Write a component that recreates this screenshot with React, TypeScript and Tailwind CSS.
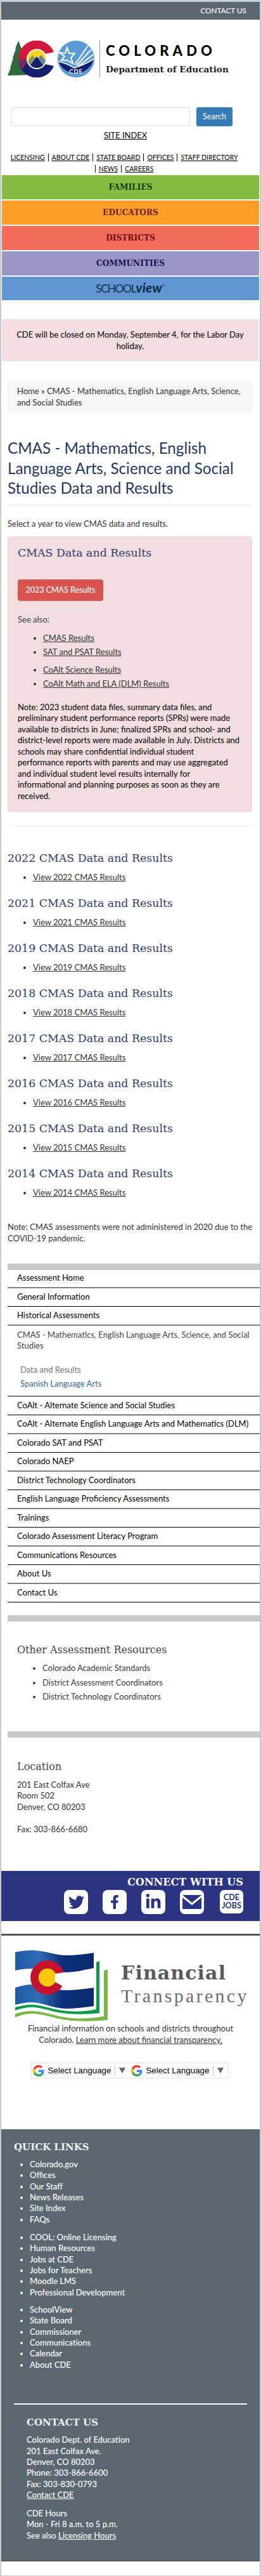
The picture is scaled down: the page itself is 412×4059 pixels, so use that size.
import { FaTwitter, FaFacebookF, FaLinkedinIn } from "react-icons/fa";

const slab = "font-['DejaVu_Serif',serif]";

function CoLogo() {
  return (
    <svg width="139" height="58" viewBox="0 0 139 58" className="block">
      <path d="M18 0 L23 13 L22 13 L28 27 L27 27 L33 43 L31 43 L37 54 L1 55 L6 43 L5 43 L10 27 L9 27 L14 13 L13 13 Z" fill="#2f6b3c" />
      <path d="M74 18 A29 29 0 0 0 18 29 L32 29 A15 15 0 0 1 60 21 Z" fill="#d3193a" />
      <path d="M18 29 A29 29 0 0 0 74 40 L60 37 A15 15 0 0 1 32 29 Z" fill="#14206e" />
      <path d="M18 29 A29 29 0 0 0 24 46 L33 31 L32 29 Z" fill="#7a2c58" />
      <circle cx="47" cy="29" r="16" fill="#fff" />
      <clipPath id="cc"><circle cx="47" cy="29" r="14" /></clipPath>
      <g clipPath="url(#cc)">
        <rect x="33" y="15" width="28" height="28" fill="#ffd21f" />
        <path d="M33 33 L40 23 L47 30 L54 23 L61 33 L61 43 L33 43 Z" fill="#7f9468" />
        <path d="M54 23 L61 32 L61 40 L50 27 Z" fill="#4c89ae" />
        <path d="M34 43 L47 25 L60 43 Z" fill="#14206e" />
      </g>
      <circle cx="109" cy="29" r="29" fill="#5b9bd3" />
      <path d="M81.5 33 Q95 36 106 43 Q123 38 136.8 29 A29 29 0 0 1 81.5 33 Z" fill="#14206e" />
      <path d="M81.5 33 Q95 36 106 43 Q123 38 136.8 29" fill="none" stroke="#fff" strokeWidth="1.6" />
      <g transform="translate(-8 0)">
        <path d="M103 11 L106 20 L115 20 L109 27 L112 36 L103 31 L94 31 L99 25 L91 19 L100 20 Z" fill="none" stroke="#fff" strokeWidth="2" />
      </g>
      <path d="M107 38 L128 8 M110 39 L133 14 M113 40 L136 22" stroke="#fff" strokeWidth="2" />
      <text x="109" y="52" textAnchor="middle" fill="#fff" fontSize="9.5" fontWeight="700" fontFamily="Lato, sans-serif" letterSpacing="0.8">CDE</text>
    </svg>
  );
}

function FlagLogo() {
  return (
    <svg width="148" height="112" viewBox="0 0 148 112" className="block">
      <defs>
        <linearGradient id="bl" x1="0" x2="1" y1="0" y2="0">
          <stop offset="0" stopColor="#1e5aa6" />
          <stop offset="0.3" stopColor="#2f6db5" />
          <stop offset="0.6" stopColor="#0d2f78" />
          <stop offset="1" stopColor="#0a2a6e" />
        </linearGradient>
      </defs>
      <path d="M1 3 C10 1 20 0 30 0 C50 1 65 8 82 8 C97 8 112 6 125 4 L125 28 C110 31 95 35 78 35 C60 34 45 29 28 29 C18 29 9 30 1 32 Z" fill="url(#bl)" />
      <path d="M1 59 C10 56 18 54 28 54 C45 54 60 62 78 63 C95 63 110 61 125 59 L125 88 C110 90 95 92 80 92 C60 91 45 83 28 82 C18 82 9 84 1 86 Z" fill="url(#bl)" />
      <circle cx="52" cy="43" r="27" fill="#c4122f" />
      <circle cx="52" cy="43" r="14.3" fill="#ffc90e" />
      <path d="M64 37 L80 34.5 L80 59 L64 50 Z" fill="#fff" />
      <path d="M1 90 C12 87 22 85 32 86 C50 88 65 95 85 96 C100 97 115 96 129 93 L129 19 L134 17 L134 99 C115 101 100 101 85 100 C65 99 50 92 32 90 C22 89 12 91 1 95 Z" fill="#0d9a4a" />
      <path d="M1 100 C12 97 22 95 32 96 C52 98 68 105 90 107 C108 108 125 107 141 104 L141 32 L147 30 L147 110 C125 112 108 112 90 111 C68 109 52 102 32 100 C22 99 12 101 1 106 Z" fill="#7ab648" />
    </svg>
  );
}

function GoogleG() {
  return (
    <svg width="18" height="18" viewBox="0 0 48 48" className="shrink-0">
      <path fill="#EA4335" d="M24 9.5c3.5 0 6.7 1.2 9.2 3.6l6.9-6.9C35.9 2.4 30.5 0 24 0 14.6 0 6.5 5.4 2.6 13.2l8 6.2C12.5 13.7 17.8 9.5 24 9.5z" />
      <path fill="#4285F4" d="M46.9 24.5c0-1.6-.1-3.1-.4-4.5H24v9h12.9c-.6 3-2.2 5.5-4.7 7.2l7.7 6c4.5-4.2 7-10.3 7-17.7z" />
      <path fill="#FBBC05" d="M10.5 28.6c-.5-1.4-.8-3-.8-4.6s.3-3.2.8-4.6l-8-6.2C.9 16.5 0 20.1 0 24s.9 7.5 2.6 10.8l7.9-6.2z" />
      <path fill="#34A853" d="M24 48c6.5 0 11.9-2.1 15.9-5.8l-7.7-6c-2.2 1.4-4.9 2.3-8.2 2.3-6.2 0-11.5-4.2-13.4-9.9l-8 6.2C6.5 42.6 14.6 48 24 48z" />
    </svg>
  );
}

function Translate() {
  return (
    <div className="flex w-[155px] h-full items-center pl-[3px]">
      <GoogleG />
      <span className="ml-[6px] font-['Liberation_Sans',sans-serif] text-[13.3px] text-black leading-none whitespace-nowrap">Select Language</span>
      <span className="ml-[6px] h-[16px] w-px bg-[#c8c8c8]" />
      <span className="ml-[6px] w-0 h-0 border-x-[5px] border-x-transparent border-t-[9px] border-t-[#666]" />
    </div>
  );
}

const bars = [
  ["FAMILIES", "bg-[#86bc3f]", "text-[#0f3d0c]"],
  ["EDUCATORS", "bg-[#ff9d27]", "text-[#6b2200]"],
  ["DISTRICTS", "bg-[#f26b5b]", "text-[#6c0f12]"],
  ["COMMUNITIES", "bg-[#9997c5]", "text-[#14144f]"],
];

const years = ["2022", "2021", "2019", "2018", "2017", "2016", "2015", "2014"];

const side: [string, boolean][] = [
  ["General Information", false],
  ["Historical Assessments", true],
];
const side2: [string, boolean][] = [
  ["CoAlt - Alternate Science and Social Studies", false],
  ["CoAlt - Alternate English Language Arts and Mathematics (DLM)", true],
  ["Colorado SAT and PSAT", false],
  ["Colorado NAEP", true],
  ["District Technology Coordinators", false],
  ["English Language Proficiency Assessments", true],
  ["Trainings", false],
  ["Colorado Assessment Literacy Program", true],
  ["Communications Resources", false],
  ["About Us", true],
  ["Contact Us", false],
];

function SideRow({ t, gray }: { t: string; gray: boolean }) {
  return (
    <div className={`pl-[15px] text-black flex items-center ${gray ? "h-[30px] border-b-2 border-[#808080]" : "h-[29px] border-b border-black"}`}>
      {t}
    </div>
  );
}

const q1 = ["Colorado.gov", "Offices", "Our Staff", "News Releases", "Site Index", "FAQs"];
const q2 = ["COOL: Online Licensing", "Human Resources", "Jobs at CDE", "Jobs for Teachers", "Moodle LMS", "Professional Development"];
const q3 = ["SchoolView", "State Board", "Commissioner", "Communications", "Calendar", "About CDE"];

function Quick({ items, cls }: { items: string[]; cls: string }) {
  return (
    <ul className={`list-disc pl-[25px] marker:text-white ${cls}`}>
      {items.map((i) => (
        <li key={i} className="leading-[17.33px] font-medium">{i}</li>
      ))}
    </ul>
  );
}

export default function App() {
  return (
    <div className="relative w-[412px] h-[4059px] overflow-hidden bg-white border-x-2 border-b border-[#c9c9c9] border-t-[3px] border-t-[#c4d0da] font-['Lato',sans-serif] text-[13px] text-[#333] leading-[17.5px]">
      <div className="h-[28px] bg-[#5c6770] flex items-center justify-end pr-[21px] text-white text-[11.8px] font-medium">CONTACT US</div>

      <div className="mt-[33px] ml-[9px] flex items-center h-[58px]">
        <CoLogo />
        <div className="ml-[7px] w-px h-[58px] bg-[#999]" />
        <div className="ml-[9px] text-black">
          <div className="font-black text-[22px] leading-[22px] tracking-[6.1px] whitespace-nowrap">COLORADO</div>
          <div className={`${slab} font-bold text-[13.66px] leading-[18px] mt-[9px] text-[#222] whitespace-nowrap`}>Department of Education</div>
        </div>
      </div>

      <div className="mt-[47px] ml-[15px] flex h-[30px]">
        <div className="w-[283px] border border-[#ddd] rounded-[3px] bg-white" />
        <div className="ml-[10px] w-[57px] bg-[#337ab7] rounded-[3px] text-white text-[12.6px] flex items-center justify-center">Search</div>
      </div>
      <div className="mt-[4px] h-[20px] text-center text-black text-[12.9px] underline pr-[16px] leading-[20px]">SITE INDEX</div>
      <div className="mt-[16px] text-center text-[10.5px] text-black leading-[18px] pl-[10px] pr-[30px] underline">
        <span>LICENSING</span>
        <span className="border-l border-black ml-[5px] pl-[5px]">ABOUT CDE</span>
        <span className="border-l border-black ml-[5px] pl-[5px]">STATE BOARD</span>
        <span className="border-l border-black ml-[5px] pl-[5px]">OFFICES</span>
        <span className="border-l border-black ml-[5px] pl-[5px]">STAFF DIRECTORY</span>{" "}
        <span className="border-l border-black pl-[5px]">NEWS</span>
        <span className="border-l border-black ml-[5px] pl-[5px]">CAREERS</span>
      </div>

      <div className="mt-[1px] mx-px flex flex-col gap-[2px]">
        {bars.map(([t, bg, fg]) => (
          <div key={t} className={`h-[38px] ${bg} ${fg} ${slab} text-[12.23px] font-bold flex items-center justify-center pt-[2px]`}>{t}</div>
        ))}
        <div className="h-[37px] bg-[#6097d2] flex items-center justify-center text-[#12304f] text-[17.5px] leading-none">
          <span className="tracking-[-1.4px]">SCHOOL</span>
          <span className="font-black italic text-[21px] -mt-[4px]">view</span>
          <span className="text-[6px] -mt-[10px] text-[#254a70]">®</span>
        </div>
      </div>

      <div className="mt-[30px] h-[66px] ml-px mr-[2px] bg-[#f2dede] text-black text-center pt-[15px] px-[20px] leading-[18px]">
        CDE will be closed on Monday, September 4, for the Labor Day holiday.
      </div>

      <div className="mt-[31px] ml-[10px] mr-[12px] h-[50px] bg-[#f5f5f5] rounded-[4px] pt-[7px] px-[15px] leading-[18px]">
        Home » CMAS - Mathematics, English Language Arts, Science, and Social Studies
      </div>

      <h1 className="mt-[40px] ml-[10px] mr-[10px] text-[24.2px] leading-[31.5px] text-[#233668] pb-[10px] border-b border-[#eee]">
        CMAS - Mathematics, English Language Arts, Science and Social Studies Data and Results
      </h1>

      <p className="mt-[19px] ml-[10px] leading-[20px]">Select a year to view CMAS data and results.</p>

      <div className="mt-[10px] ml-[10px] mr-[12px] h-[435px] bg-[#f2dede] rounded-[4px] px-[16px] pt-[15px]">
        <h2 className={`${slab} text-[#2f3d73] text-[17.37px] leading-[22px] whitespace-nowrap`}>CMAS Data and Results</h2>
        <div className="mt-[31px] w-[135px] h-[34px] rounded-[4px] bg-[#d9534f] text-white text-[12.5px] flex items-center justify-center font-medium">2023 CMAS Results</div>
        <p className="mt-[19px] leading-[20px] text-[#444]">See also:</p>
        <ul className="mt-[10px] list-disc pl-[40px] underline text-[#333] leading-[18px]">
          <li className="mb-[4px]">CMAS Results</li>
          <li className="mb-[10px]">SAT and PSAT Results</li>
          <li className="mb-[4px]">CoAlt Science Results</li>
          <li>CoAlt Math and ELA (DLM) Results</li>
        </ul>
        <p className="mt-[20px] text-black leading-[17.5px]">
          Note: 2023 student data files, summary data files, and preliminary student performance reports (SPRs) were made available to districts in June; finalized SPRs and school- and district-level reports were made available in July. Districts and schools may share confidential individual student performance reports with parents and may use aggregated and individual student level results internally for<br />informational and planning purposes as soon as they are<br />received.
        </p>
      </div>

      <div className="mt-[21px] ml-[8px] mr-[10px] border-t border-[#f0f0f0]" />

      <div className="mt-[38px] ml-[10px]">
        {years.map((y) => (
          <div key={y} className="h-[71px]">
            <h3 className={`${slab} text-[#2d3c72] text-[17.37px] leading-[24px] h-[24px] whitespace-nowrap`}>{y} CMAS Data and Results</h3>
            <ul className="mt-[9px] list-disc pl-[40px] underline leading-[18px]">
              <li>View {y} CMAS Results</li>
            </ul>
          </div>
        ))}
      </div>

      <p className="mt-[16px] ml-[10px] mr-[10px] leading-[18px]">Note: CMAS assessments were not administered in 2020 due to the COVID-19 pandemic.</p>

      <div className="mt-[31px] ml-[10px] -mr-[2px] h-[10px] bg-[#c9c9c9]" />
      <div className="ml-[10px] -mr-[2px]">
        <div className="pl-[15px] text-black flex items-center h-[29px] border-b-2 border-[#808080]">Assessment Home</div>
        {side.map(([t, g]) => <SideRow key={t} t={t} gray={g} />)}
        <div className="h-[112px] pl-[15px] pt-[6px] border-b-2 border-[#808080]">
          <div className="text-[#444]">CMAS - Mathematics, English Language Arts, Science, and Social Studies</div>
          <div className="mt-[20px] ml-[5px] text-[#777]">Data and Results</div>
          <div className="mt-[4.5px] ml-[5px] text-[#33698f]">Spanish Language Arts</div>
        </div>
        {side2.map(([t, g]) => <SideRow key={t} t={t} gray={g} />)}
      </div>
      <div className="mt-[20px] ml-[10px] -mr-[2px] h-[10px] bg-[#c9c9c9]" />

      <div className="pl-[25px] mt-[33px]">
        <h3 className={`${slab} text-[#444] text-[16px] leading-[24px] whitespace-nowrap`}>Other Assessment Resources</h3>
        <ul className="mt-[7px] list-disc pl-[40px] leading-[18px] text-[#3a3a3a]">
          <li className="mb-[5px]">Colorado Academic Standards</li>
          <li className="mb-[4px]">District Assessment Coordinators</li>
          <li>District Technology Coordinators</li>
        </ul>
      </div>
      <div className="mt-[46px] ml-[10px] -mr-[2px] h-[10px] bg-[#c9c9c9]" />

      <div className="pl-[25px] mt-[34px]">
        <h3 className={`${slab} text-[#444] text-[16px] leading-[24px]`}>Location</h3>
        <p className="mt-[8px]">201 East Colfax Ave<br />Room 502<br />Denver, CO 80203<br /><br />Fax: 303-866-6680</p>
      </div>

      <div className="mt-[57px] h-[79px] bg-[#2b3481] text-white relative">
        <div className={`${slab} absolute right-[26px] top-[8px] text-[16.1px] font-bold leading-[20px] whitespace-nowrap`}>CONNECT WITH US</div>
        <div className="absolute left-[99px] top-[30px] flex">
          <div className="w-[38px] h-[38px] rounded-[8px] bg-white flex items-center justify-center text-[#2b3481]"><FaTwitter size={25} /></div>
          <div className="ml-[23px] w-[38px] h-[38px] rounded-[8px] bg-white flex items-center justify-center text-[#2b3481]"><FaFacebookF size={22} /></div>
          <div className="ml-[23px] w-[38px] h-[38px] rounded-[8px] bg-white flex items-center justify-center text-[#2b3481]"><FaLinkedinIn size={26} /></div>
          <div className="ml-[23px] w-[38px] h-[38px] rounded-[8px] bg-white flex items-center justify-center">
            <svg width="30" height="22" viewBox="0 0 30 22"><path d="M0 0 H30 L15 12 Z M0 4 L15 16 L30 4 V22 H0 Z" fill="#2b3481" /></svg>
          </div>
          <div className="ml-[25px] w-[37px] h-[37px] rounded-[7px] bg-white text-[#2b3481] font-bold text-[12.5px] leading-[12.5px] flex flex-col items-center justify-center"><span>CDE</span><span>JOBS</span></div>
        </div>
      </div>

      <div className="mt-[20px] h-[3px] bg-[#555]" />

      <div className="mt-[23px] ml-[21px] flex h-[112px]">
        <FlagLogo />
        <div className="ml-[20px] pt-[20px]">
          <div className={`${slab} font-bold text-[30px] leading-[32px] text-[#58595b] tracking-[1.1px] whitespace-nowrap`}>Financial</div>
          <div className="font-['Liberation_Serif',serif] text-[30px] leading-[32px] mt-[4px] text-[#6d6e71] tracking-[3.3px] whitespace-nowrap">Transparency</div>
        </div>
      </div>

      <p className="mt-[2px] px-[20px] text-center leading-[18px]">
        Financial information on schools and districts throughout Colorado. <span className="underline">Learn more about financial transparency.</span>
      </p>

      <div className="mt-[27px] mx-auto w-[313px] h-[25px] border border-[#e2e2e2] flex -translate-x-[2px]">
        <Translate />
        <Translate />
      </div>

      <div className="mt-[80px] h-[681px] bg-[#5c6770] text-white border-b-2 border-[#4c555c] pl-[20px]">
        <h3 className={`${slab} pt-[17px] font-bold text-[15px] leading-[22px] text-[#eef0f2]`}>QUICK LINKS</h3>
        <Quick items={q1} cls="mt-[8px]" />
        <Quick items={q2} cls="mt-[11px]" />
        <Quick items={q3} cls="mt-[10px]" />
        <div className="mt-[52px] mr-[20px] h-[2px] bg-white" />
        <div className="pl-[20px]">
          <h3 className={`${slab} mt-[17.5px] font-bold text-[15px] leading-[22px] text-[#eef0f2]`}>CONTACT US</h3>
          <p className="mt-[8px] leading-[17.33px] font-medium">
            Colorado Dept. of Education<br />201 East Colfax Ave.<br />Denver, CO 80203<br />Phone: 303-866-6600<br />Fax: 303-830-0793<br /><span className="underline">Contact CDE</span>
          </p>
          <p className="mt-[11.5px] leading-[17.33px] font-medium">
            CDE Hours<br />Mon - Fri 8 a.m. to 5 p.m.<br />See also <span className="underline">Licensing Hours</span>
          </p>
        </div>
      </div>
    </div>
  );
}
